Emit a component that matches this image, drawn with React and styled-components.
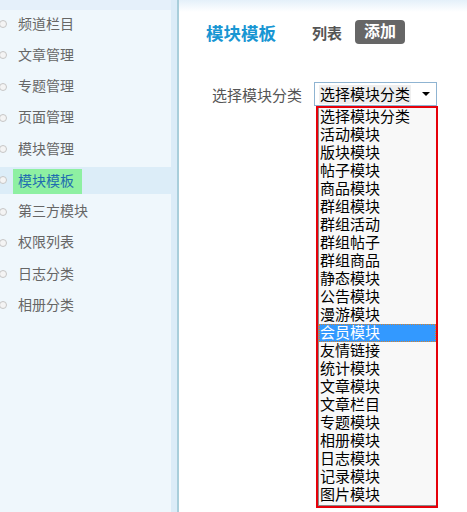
import React, { useState } from 'react'
import styled, { createGlobalStyle } from 'styled-components'

const GlobalStyle = createGlobalStyle`
    html, body {
        margin: 0;
        padding: 0;
        background: #fff;
    }
    body {
        font-family: "Liberation Sans", "Noto Sans CJK SC", sans-serif;
    }
`

const menuItems = [
    '频道栏目',
    '文章管理',
    '专题管理',
    '页面管理',
    '模块管理',
    '模块模板',
    '第三方模块',
    '权限列表',
    '日志分类',
    '相册分类',
]

const categories = [
    '选择模块分类',
    '活动模块',
    '版块模块',
    '帖子模块',
    '商品模块',
    '群组模块',
    '群组活动',
    '群组帖子',
    '群组商品',
    '静态模块',
    '公告模块',
    '漫游模块',
    '会员模块',
    '友情链接',
    '统计模块',
    '文章模块',
    '文章栏目',
    '专题模块',
    '相册模块',
    '日志模块',
    '记录模块',
    '图片模块',
]

function App() {
    const [active] = useState('模块模板')
    const [hover] = useState('会员模块')

    return (
        <>
            <GlobalStyle />
            <Page>
                <Sidebar>
                    <SideHead />
                    <Menu>
                        {menuItems.map((item) => (
                            <MenuRow key={item} $active={item === active}>
                                <Bullet />
                                <MenuLabel $active={item === active}>
                                    {item}
                                </MenuLabel>
                            </MenuRow>
                        ))}
                    </Menu>
                </Sidebar>
                <Divider />
                <Main>
                    <Header>
                        <Title>模块模板</Title>
                        <Tab>列表</Tab>
                        <AddButton>添加</AddButton>
                    </Header>
                    <FormRow>
                        <FieldLabel>选择模块分类</FieldLabel>
                        <SelectBox>
                            <SelectValue>选择模块分类</SelectValue>
                            <Arrow />
                            <Dropdown>
                                <OptionList>
                                    {categories.map((c) => (
                                        <Option key={c} $hover={c === hover}>
                                            {c}
                                        </Option>
                                    ))}
                                </OptionList>
                            </Dropdown>
                        </SelectBox>
                    </FormRow>
                </Main>
            </Page>
        </>
    )
}

const Page = styled.div`
    display: flex;
    width: 100%;
    height: 100vh;
    overflow: hidden;
`

const Sidebar = styled.div`
    width: 171px;
    flex-shrink: 0;
    background-color: #eff7fc;
    display: flex;
    flex-direction: column;
`

const SideHead = styled.div`
    height: 10px;
    background-color: #e5f0fa;
`

const Menu = styled.ul`
    list-style: none;
    margin: 0;
    padding: 0.5px 0 0;
    display: flex;
    flex-direction: column;
    gap: 4.25px;
`

const MenuRow = styled.li`
    height: 27px;
    display: flex;
    align-items: ${(p) => (p.$active ? 'flex-end' : 'center')};
    background-color: ${(p) => (p.$active ? '#dcedf8' : 'transparent')};
`

const Bullet = styled.span`
    width: 6px;
    height: 6px;
    margin-left: -1px;
    border: 1px solid #c6c6c6;
    border-radius: 50%;
    background-color: #f4f4f4;
    flex-shrink: 0;
    align-self: center;
`

const MenuLabel = styled.span`
    font-size: 14px;
    line-height: 25px;
    height: 25px;
    margin-left: ${(p) => (p.$active ? '6px' : '11px')};
    padding: ${(p) => (p.$active ? '0 8px 0 5px' : '0')};
    color: ${(p) => (p.$active ? '#1f6db0' : '#666')};
    background-color: ${(p) => (p.$active ? '#8ef0a2' : 'transparent')};
`

const Divider = styled.div`
    width: 6px;
    flex-shrink: 0;
    background-color: #dbecf8;
    border-right: 2px solid #a9cedb;
`

const Main = styled.div`
    flex: 1;
    padding-left: 27px;
    background: linear-gradient(#e4f0f9 0, #ffffff 12px);
`

const Header = styled.div`
    display: flex;
    align-items: center;
    height: 24px;
    margin-top: 20px;
`

const Title = styled.h2`
    margin: 0;
    font-size: 17.5px;
    font-weight: bold;
    color: #1896d3;
`

const Tab = styled.span`
    margin-left: 36px;
    font-size: 15px;
    font-weight: bold;
    color: #555;
`

const AddButton = styled.button`
    margin-left: 13px;
    width: 50px;
    height: 24px;
    padding: 0;
    border: none;
    border-radius: 4px;
    background-color: #666;
    color: #fff;
    font-family: inherit;
    font-size: 16px;
    font-weight: bold;
    line-height: 24px;
`

const FormRow = styled.div`
    display: flex;
    align-items: center;
    margin-top: 38px;
    margin-left: 6px;
`

const FieldLabel = styled.label`
    font-size: 15px;
    color: #555;
`

const SelectBox = styled.div`
    position: relative;
    margin-left: 12px;
    width: 123px;
    height: 24px;
    box-sizing: border-box;
    border: 1px solid #8fb4d2;
    background-color: #fff;
    display: flex;
    align-items: center;
`

const SelectValue = styled.span`
    margin-left: 4px;
    padding: 0 1px;
    font-size: 15px;
    line-height: 19px;
    color: #000;
    background-color: #efefef;
`

const Arrow = styled.span`
    margin-left: 11px;
    width: 0;
    height: 0;
    border-left: 4px solid transparent;
    border-right: 4px solid transparent;
    border-top: 4px solid #000;
`

const Dropdown = styled.div`
    position: absolute;
    top: 23px;
    left: 1px;
    width: 122px;
    height: 402px;
    box-sizing: border-box;
    border: 2px solid #e6000a;
    z-index: 2;
`

const OptionList = styled.ul`
    list-style: none;
    margin: 0;
    padding: 0;
    height: 100%;
    box-sizing: border-box;
    background-color: #f8f8f8;
    border-left: 1px solid #8a8a8a;
    border-bottom: 1px solid #8a8a8a;
`

const Option = styled.li`
    height: 18px;
    line-height: 18px;
    padding-left: 1px;
    font-size: 15px;
    white-space: nowrap;
    color: ${(p) => (p.$hover ? '#fff' : '#000')};
    background-color: ${(p) => (p.$hover ? '#3399ff' : 'transparent')};
    outline: ${(p) => (p.$hover ? '1px dotted #d9822b' : 'none')};
    outline-offset: -1px;
`

export default App
